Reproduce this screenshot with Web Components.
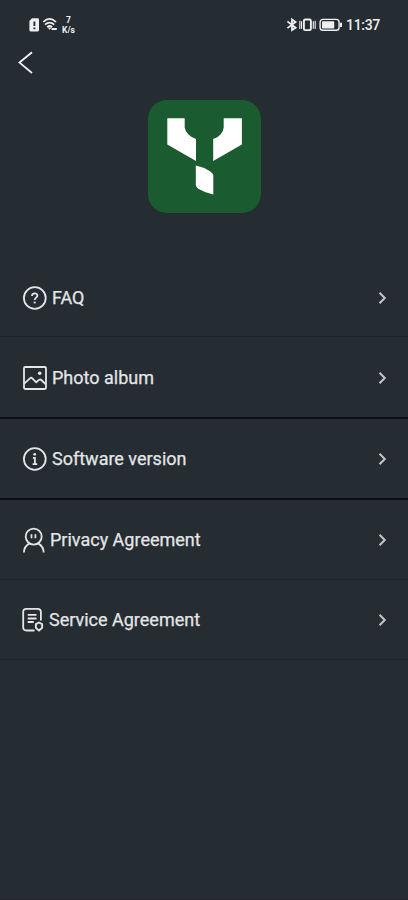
<!DOCTYPE html>
<html lang="en"><head><meta charset="utf-8"><title>About</title>
<style>
html,body{margin:0;height:100%}
body{background:#252c32;font-family:Roboto,"Liberation Sans",sans-serif;color:#e4e6e7;overflow:hidden}
</style></head><body>
<about-screen></about-screen>
<script>
const define=(name,html)=>customElements.define(name,class extends HTMLElement{
  constructor(){super();this.attachShadow({mode:'open'}).innerHTML=html;}
});
const icons={
faq:`<circle cx="11.8" cy="12" r="10.9"/><path d="M9 9.9C9 6.4 14.4 6.5 14.4 9.7C14.4 11.6 11.7 11.7 11.7 14" stroke-width="1.8"/><path d="M11.7 15.6v1.8" stroke-width="2"/>`,
photo:`<rect x="1" y="1" width="22" height="22" rx="1.2"/><path d="M1.5 17.3L7.2 12.2Q8.3 11.2 9.3 12.3L13.2 16.3L16 13.9Q17.2 13 18.3 14L22.5 18"/><circle cx="16.7" cy="7.3" r="1.8" fill="currentColor" stroke="none"/>`,
info:`<circle cx="11.8" cy="12" r="10.9"/><path d="M9.9 10.8h2v6.2M9.6 17.1h4.6" stroke-width="1.8"/><circle cx="11.7" cy="7.3" r="1.4" fill="currentColor" stroke="none"/>`,
person:`<circle cx="10.7" cy="8.6" r="8"/><path d="M8.5 6.3v3.9M12.4 6.3v3.9" stroke-width="1.7"/><path d="M.9 24.4C1 20 3 17.4 6.5 15.4M20.7 24.4C20.6 20 18.6 17.4 15 15.4"/>`,
doc:`<path d="M11.5 22.5H3.5Q.2 22.5 .2 19.3V4Q.2 .8 3.5 .8H14.6Q17.9 .8 17.9 4V12.6"/><path d="M4.7 6.9h8.8M4.7 10.5h8.8M4.7 14h6" stroke-width="1.8"/><path d="M16 14.5L19.1 16.1V19.7L16 22.6L12.9 19.7V16.1Z" stroke-width="1.9" stroke-linejoin="round"/>`};
define('status-bar',`<style>
:host{display:flex;justify-content:space-between;height:48px;box-sizing:border-box;padding:15px 28px 0 28px;color:#eef0f1}
.g{display:flex;height:20px;align-items:center}.net{width:17px;margin-left:2px;text-align:center;font-weight:700;font-size:8.5px;line-height:10.5px}
.time{font-size:14px;font-weight:500;letter-spacing:-.3px;margin-left:3px;width:34px;white-space:nowrap}
svg{display:block}
</style><div class="g"><svg width="30" height="20" viewBox="0 0 30 20"><path d="M4 3.3h5.7q1.3 0 1.3 1.3v10.5q0 1.3-1.3 1.3H2.7q-1.3 0-1.3-1.3V6z" fill="currentColor"/><path d="M6.4 6.4v4.6M6.4 12.5v1.8" stroke="#252c32" stroke-width="1.9"/><g fill="none" stroke="currentColor" stroke-width="1.7"><path d="M15.2 7Q21.6 .9 28 7M17 9.7Q21.6 5.4 26.2 9.7M19.1 12.1Q21.6 9.9 24.1 12.1"/></g><path d="M19.6 12.4h4L21.6 14.8zM23.6 13h5.2v1.9h-5.2z" fill="currentColor"/></svg><div class="net">7<br>K/s</div></div>
<div class="g"><svg width="58" height="20" viewBox="0 0 58 20" fill="none" stroke="currentColor"><path d="M2.4 6.4L10.6 12.7L7 15V4.4L10.6 7L2.4 13.1" stroke-width="1.8"/><rect x="18.9" y="4.5" width="7" height="10.6" rx="1.4" stroke-width="1.9"/><path d="M16.5 6.2v7.6M28.3 6.2v7.6M14.8 5.8v8.2M30.2 5.8v8.2" stroke-width="1.1"/><rect x="35.1" y="4.4" width="19" height="10.9" rx="2.8" stroke-width="1.4"/><rect x="37" y="6.2" width="12.2" height="7.3" rx=".8" fill="currentColor" stroke="none"/><path d="M56 7.7v4.4" stroke-width="2"/></svg><span class="time">11:37</span></div>`);
define('back-button',`<style>:host{display:block;height:30px;padding-left:18px}svg{display:block}</style><svg width="16" height="30" viewBox="0 0 16 30"><path d="M14 4.2L1.5 14.6L14 25" fill="none" stroke="#f1f2f3" stroke-width="1.8"/></svg>`);
define('app-logo',`<style>:host{display:flex;justify-content:center;padding:22px 0 44px;margin-left:1px}svg{display:block}</style><svg width="113" height="113" viewBox="0 0 113 113"><rect width="113" height="113" rx="19" fill="#1a5c30"/><g fill="#fff"><path d="M19.3 18.2H36.7V27.5Q37 31 40.5 34.5Q43.5 37.6 48 39V61L19.3 44.4Z"/><path d="M93.9 18.2H75.7V27.5Q75.6 31 72.5 34.6Q70 37.8 65.2 39V61L93.9 44.4Z"/><path d="M47.8 65.5Q55.5 67 62 71.2Q65 73.1 65.3 75V94.5Q57 92.8 50.3 88.7Q48 87.2 47.8 85Z"/></g></svg>`);
customElements.define('menu-row',class extends HTMLElement{constructor(){super();this.attachShadow({mode:'open'}).innerHTML=`<style>
:host{display:flex;align-items:center;height:var(--h,80px);box-sizing:border-box;padding:var(--top,0) 21px 0 23px;border-bottom:var(--thick,1px) solid var(--line,#1d242a)}
.icon{flex:none;width:var(--iw,24px);height:24px;margin-right:5px;fill:none;stroke:currentColor;stroke-width:1.8;overflow:visible}
.label{flex:1;font-size:18px;line-height:24px;white-space:nowrap;-webkit-text-stroke:.25px currentColor}
</style><svg class="icon" viewBox="0 0 ${this.getAttribute('w')||24} 24">${icons[this.getAttribute('icon')]}</svg><span class="label"><slot></slot></span><svg width="9" height="14" viewBox="0 0 9 14"><path d="M1.5 1.8L6.8 7L1.5 12.2" fill="none" stroke="#c2c6c9" stroke-width="2"/></svg>`}});
define('about-screen',`<style>
:host{display:flex;flex-direction:column;height:900px;box-sizing:border-box;border-bottom:1px solid #242235}
.dark{--line:#0a0f13;--thick:2px}
</style><status-bar></status-bar><back-button></back-button><app-logo></app-logo><main>
<menu-row icon="faq" style="--top:2px">FAQ</menu-row>
<menu-row class="dark" icon="photo" style="--top:1px;--h:82px">Photo album</menu-row>
<menu-row class="dark" icon="info" style="--h:81px">Software version</menu-row>
<menu-row icon="person" w="22" style="--iw:22px">Privacy Agreement</menu-row>
<menu-row icon="doc" w="21" style="--iw:21px">Service Agreement</menu-row></main>`);
</script></body></html>
